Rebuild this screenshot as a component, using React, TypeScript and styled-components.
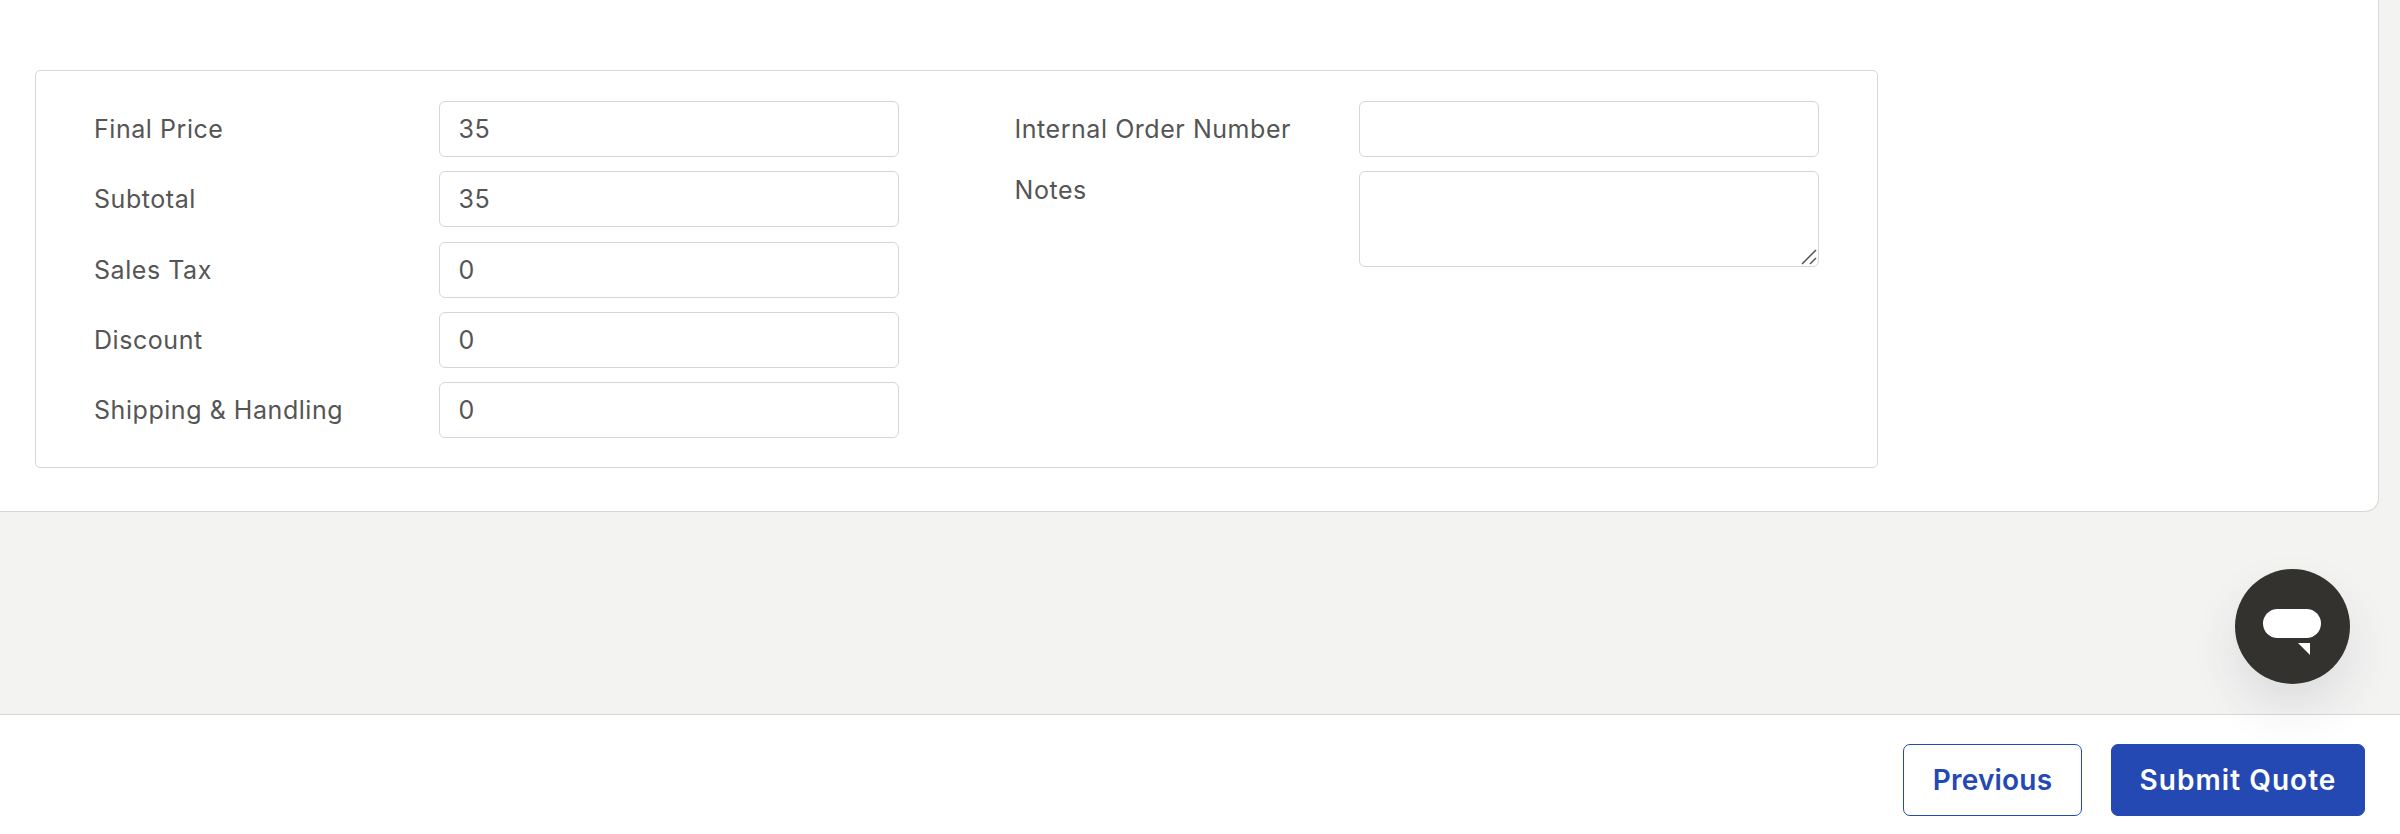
import React from "react";
import styled, { createGlobalStyle } from "styled-components";

const Global = createGlobalStyle`
  html, body { margin: 0; padding: 0; height: 100%; background: #f3f3f2; overflow: hidden; }
  #root { height: 100%; }
  * { box-sizing: border-box; }
`;

const FONT = `"Inter", "Liberation Sans", sans-serif`;

const Page = styled.div`
  display: flex;
  flex-direction: column;
  height: 100vh;
  font-family: ${FONT};
`;

const Panel = styled.section`
  width: 2379px;
  height: 512px;
  flex: none;
  padding: 70px 0 0 35px;
  background: #fff;
  border-right: 1px solid #d8d8d8;
  border-bottom: 1px solid #d8d8d8;
  border-bottom-right-radius: 14px;
`;

const Card = styled.div`
  width: 1843px;
  height: 398px;
  padding: 30px 58px 0;
  border: 1px solid #d8d8d8;
  border-radius: 5px;
  background: #fff;
  display: grid;
  grid-template-columns: 1fr 1fr;
  column-gap: 116px;
`;

const Fields = styled.div`
  display: flex;
  flex-direction: column;
  gap: 14.25px;
`;

const Row = styled.div<{ $top?: boolean }>`
  display: grid;
  grid-template-columns: 344.5px 460px;
  align-items: ${(p) => (p.$top ? "start" : "center")};
`;

const Label = styled.label<{ $top?: boolean }>`
  font-size: 25px;
  letter-spacing: 0.55px;
  line-height: 32px;
  color: #555555;
  padding-top: ${(p) => (p.$top ? "3px" : "0")};
`;

const TextInput = styled.input`
  width: 460px;
  height: 56px;
  padding: 0 19px;
  border: 1px solid #d6d6d6;
  border-radius: 6px;
  background: #fff;
  color: #555555;
  font: 400 25px ${FONT};
  letter-spacing: 0.6px;
  outline: none;
`;

const AreaWrap = styled.div`
  position: relative;
  width: 460px;
  height: 96px;
`;

const TextArea = styled.textarea`
  display: block;
  width: 100%;
  height: 100%;
  padding: 12px 19px;
  border: 1px solid #d6d6d6;
  border-radius: 6px;
  background: #fff;
  color: #555555;
  font: 400 25px ${FONT};
  outline: none;
  resize: none;
`;

const Grip = styled.svg`
  position: absolute;
  right: 2px;
  bottom: 2px;
  width: 16px;
  height: 16px;
  pointer-events: none;
`;

const Spacer = styled.div`
  flex: 1;
`;

const Footer = styled.footer`
  flex: none;
  height: 120px;
  padding: 29px 35px 0 0;
  background: #fff;
  border-top: 1px solid #d8d8d8;
  display: flex;
  justify-content: flex-end;
  gap: 29px;
`;

const Button = styled.button<{ $primary?: boolean }>`
  height: 72px;
  width: ${(p) => (p.$primary ? "254px" : "179px")};
  padding: 0;
  border: 1px solid #2449b2;
  border-radius: 7px;
  background: ${(p) => (p.$primary ? "#2449b2" : "#fff")};
  color: ${(p) => (p.$primary ? "#fff" : "#2449b2")};
  font: 600 28px ${FONT};
  letter-spacing: ${(p) => (p.$primary ? "1.05px" : "0.2px")};
`;

const ChatButton = styled.button`
  position: fixed;
  left: 2235px;
  top: 569px;
  width: 115px;
  height: 115px;
  padding: 0;
  border: 0;
  border-radius: 50%;
  background: #33322f;
  box-shadow: 0 24px 48px rgba(40, 55, 55, 0.11);
  display: flex;
  align-items: center;
  justify-content: center;
`;

const rows = [
  ["Final Price", "35"],
  ["Subtotal", "35"],
  ["Sales Tax", "0"],
  ["Discount", "0"],
  ["Shipping & Handling", "0"],
];

export default function App() {
  return (
    <Page>
      <Global />
      <Panel>
        <Card>
          <Fields>
            {rows.map(([label, value]) => (
              <Row key={label}>
                <Label>{label}</Label>
                <TextInput readOnly value={value} />
              </Row>
            ))}
          </Fields>
          <Fields>
            <Row>
              <Label>Internal Order Number</Label>
              <TextInput readOnly value="" />
            </Row>
            <Row $top>
              <Label $top>Notes</Label>
              <AreaWrap>
                <TextArea readOnly value="" />
                <Grip viewBox="0 0 16 16">
                  <path d="M1 15 15 1M9 15l6-6" stroke="#555" strokeWidth="1.5" fill="none" />
                </Grip>
              </AreaWrap>
            </Row>
          </Fields>
        </Card>
      </Panel>
      <Spacer />
      <Footer>
        <Button>Previous</Button>
        <Button $primary>Submit Quote</Button>
      </Footer>
      <ChatButton aria-label="Chat">
        <svg width="115" height="115" viewBox="0 0 115 115">
          <rect x="28" y="40" width="58" height="29" rx="14.5" fill="#fff" />
          <path d="M63 74h12v12z" fill="#fff" />
        </svg>
      </ChatButton>
    </Page>
  );
}
